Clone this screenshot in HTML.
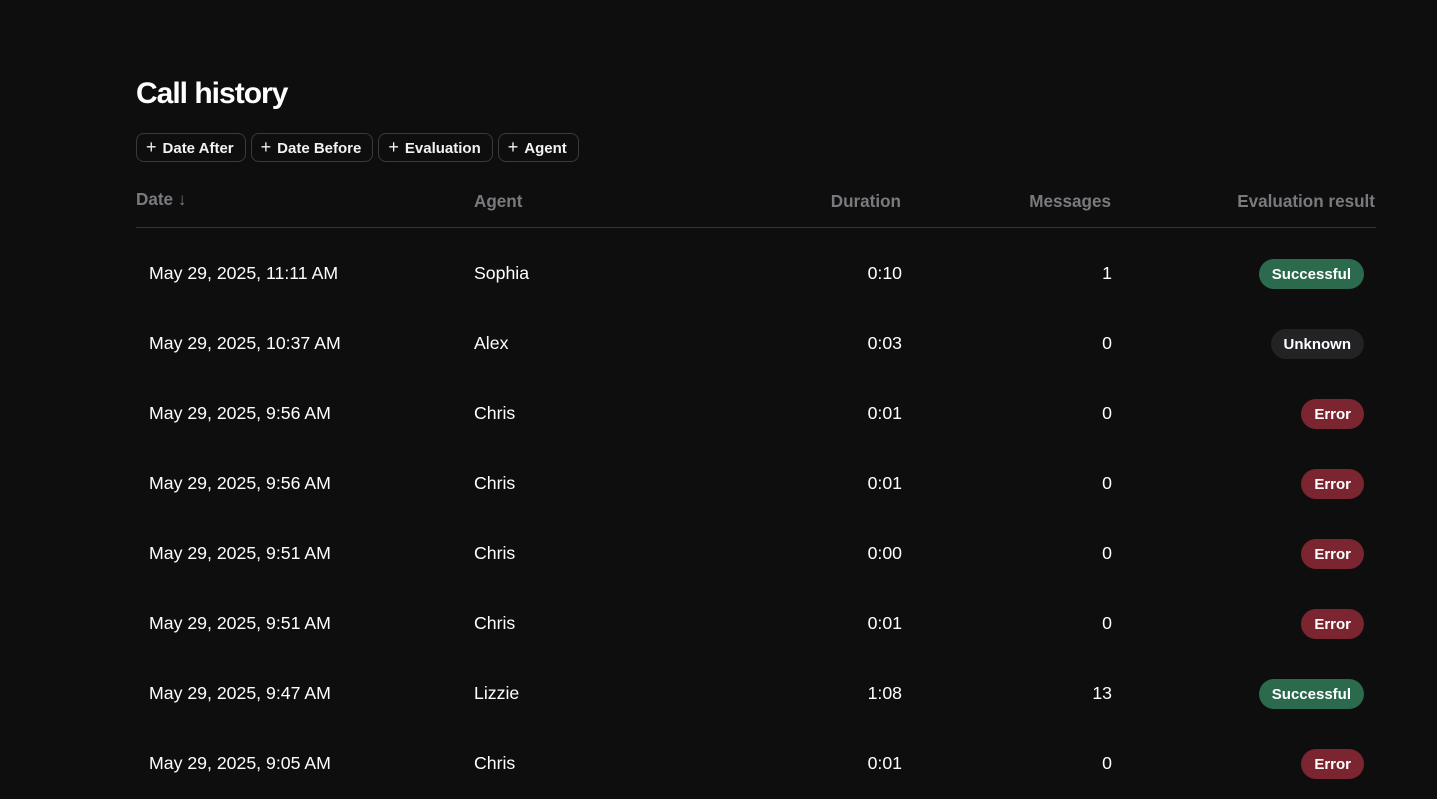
<!DOCTYPE html>
<html><head><style>
body{margin:0;background:#0e0e0e;width:1437px;height:799px;overflow:hidden;font-family:"Liberation Sans",sans-serif;color:#fff}
h1{position:absolute;left:136px;top:77px;margin:0;font-size:30px;font-weight:bold;letter-spacing:-1px}
.chips{position:absolute;left:136px;top:133px;display:flex;gap:5px}
.chip{height:29px;box-sizing:border-box;border:1px solid #3a3a3a;border-radius:8px;padding:0 11px 0 9px;font-size:15px;font-weight:bold;line-height:27px;color:#f2f2f2;white-space:nowrap}
.chip span{font-weight:normal;font-size:18px;margin-right:6px}
.h{position:absolute;top:192px;font-size:17.1px;font-weight:bold;color:#7a7a7e}
.line{position:absolute;left:136px;top:227px;width:1240px;height:1px;background:#333}
.row{position:absolute;left:0;width:1437px;height:30px;font-size:17.7px}
.row div{position:absolute;top:4px}
.b{top:0!important;right:73px;height:30px;line-height:31px;border-radius:15px;padding:0 13px;font-size:15px;font-weight:bold}
.s{background:#2b6a4c}.u{background:#232325}.e{background:#7a2530}
</style></head><body>
<h1>Call history</h1>
<div class="chips"><div class="chip"><span>+</span>Date After</div><div class="chip"><span>+</span>Date Before</div><div class="chip"><span>+</span>Evaluation</div><div class="chip"><span>+</span>Agent</div></div>
<div class="h" style="left:136px;top:190px">Date <span style="font-weight:normal">↓</span></div>
<div class="h" style="left:474px">Agent</div>
<div class="h" style="right:536px">Duration</div>
<div class="h" style="right:326px">Messages</div>
<div class="h" style="right:62px">Evaluation result</div>
<div class="line"></div>
<div class="row" style="top:259px"><div style="left:149px">May 29, 2025, 11:11 AM</div><div style="left:474px">Sophia</div><div style="right:535px">0:10</div><div style="right:325px">1</div><div class="b s">Successful</div></div>
<div class="row" style="top:329px"><div style="left:149px">May 29, 2025, 10:37 AM</div><div style="left:474px">Alex</div><div style="right:535px">0:03</div><div style="right:325px">0</div><div class="b u">Unknown</div></div>
<div class="row" style="top:399px"><div style="left:149px">May 29, 2025, 9:56 AM</div><div style="left:474px">Chris</div><div style="right:535px">0:01</div><div style="right:325px">0</div><div class="b e">Error</div></div>
<div class="row" style="top:469px"><div style="left:149px">May 29, 2025, 9:56 AM</div><div style="left:474px">Chris</div><div style="right:535px">0:01</div><div style="right:325px">0</div><div class="b e">Error</div></div>
<div class="row" style="top:539px"><div style="left:149px">May 29, 2025, 9:51 AM</div><div style="left:474px">Chris</div><div style="right:535px">0:00</div><div style="right:325px">0</div><div class="b e">Error</div></div>
<div class="row" style="top:609px"><div style="left:149px">May 29, 2025, 9:51 AM</div><div style="left:474px">Chris</div><div style="right:535px">0:01</div><div style="right:325px">0</div><div class="b e">Error</div></div>
<div class="row" style="top:679px"><div style="left:149px">May 29, 2025, 9:47 AM</div><div style="left:474px">Lizzie</div><div style="right:535px">1:08</div><div style="right:325px">13</div><div class="b s">Successful</div></div>
<div class="row" style="top:749px"><div style="left:149px">May 29, 2025, 9:05 AM</div><div style="left:474px">Chris</div><div style="right:535px">0:01</div><div style="right:325px">0</div><div class="b e">Error</div></div>
</body></html>
